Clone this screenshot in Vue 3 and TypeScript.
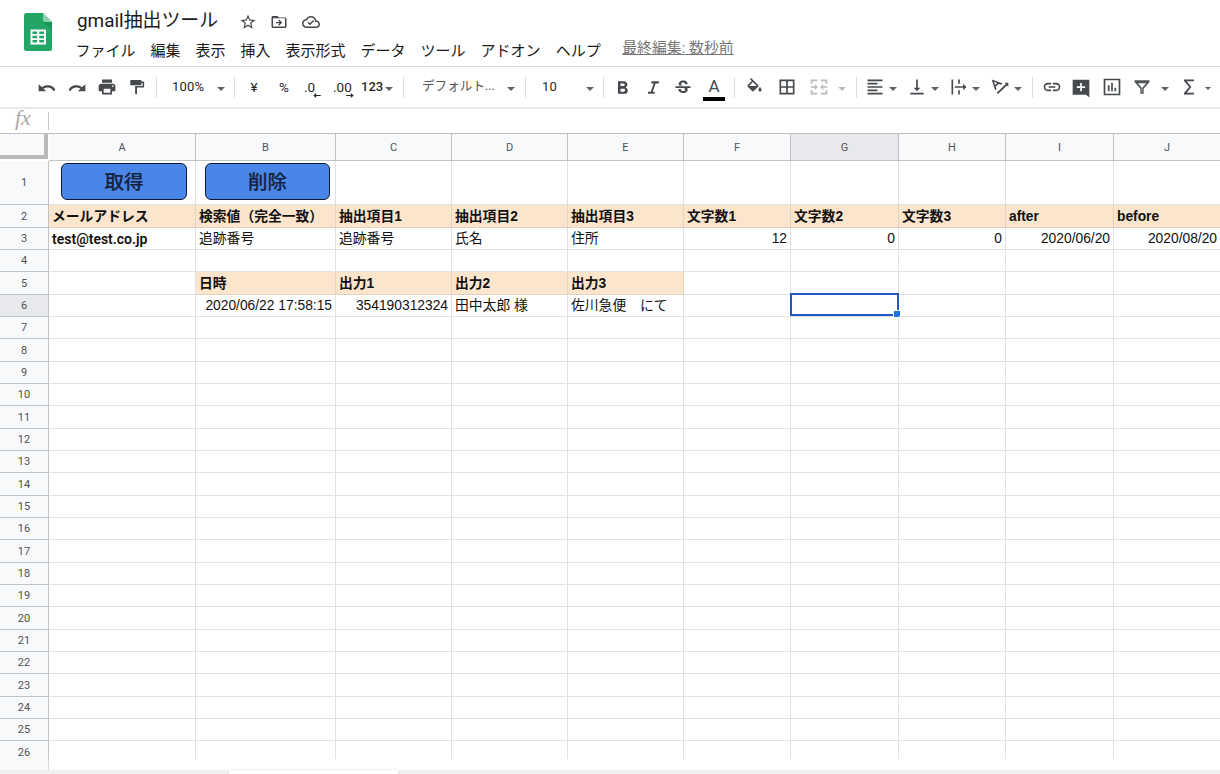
<script setup lang="ts">
type Cell = { text?: string; fill?: boolean; bold?: boolean; right?: boolean; roboto?: boolean }
type Tool = { kind: 'icon' | 'sep' | 'caret' | 'text'; d?: string; text?: string; cls?: string }

const menus: string[] = ['ファイル', '編集', '表示', '挿入', '表示形式', 'データ', 'ツール', 'アドオン', 'ヘルプ']
const letters: string[] = ['A', 'B', 'C', 'D', 'E', 'F', 'G', 'H', 'I', 'J']

const icon = (d: string, cls = ''): Tool => ({ kind: 'icon', d, cls })
const text = (t: string, cls: string): Tool => ({ kind: 'text', text: t, cls })
const sep: Tool = { kind: 'sep' }
const caret: Tool = { kind: 'caret' }

const tools: Tool[] = [
  icon('M2 7.500v8.500h9l-3.200-3c1.300-1 3-1.700 4.800-1.700 3.300 0 6 1.700 7 4.200l2.400-.9C21 11 17.300 8.800 12.800 8.800c-2.500 0-4.800.8-6.600 2.300z', 'undo'),
  icon('M22 7.500v8.500h-9l3.200-3c-1.300-1-3-1.700-4.800-1.700-3.300 0-6 1.700-7 4.200l-2.400-.9C3 11 6.700 8.800 11.200 8.800c2.500 0 4.800.8 6.600 2.300z', 'undo'),
  icon('M19 8H5c-1.660 0-3 1.340-3 3v6h4v4h12v-4h4v-6c0-1.660-1.340-3-3-3zm-3 11H8v-5h8v5zm3-7c-.55 0-1-.45-1-1s.45-1 1-1 1 .45 1 1-.45 1-1 1zm-1-9H6v4h12V3z', 'shift'),
  icon('M18 4V3c0-.55-.45-1-1-1H4c-.55 0-1 .45-1 1v5c0 .55.45 1 1 1h13c.55 0 1-.45 1-1V6h1.500v4H9.500v10c0 .55.450 1 1 1H12V12h9.500V4z', 'paint'),
  sep,
  text('100%', 'zoom'),
  caret,
  sep,
  text('¥', 'mid'),
  text('%', 'mid'),
  text('.0', 'dec left'),
  text('.00', 'dec'),
  text('123', 'num'),
  caret,
  sep,
  text('デフォルト...', 'font'),
  caret,
  sep,
  text('10', 'size'),
  caret,
  sep,
  icon('M15.600 10.790c.970-.670 1.650-1.770 1.650-2.790 0-2.260-1.750-4-4-4H6v15h8.040c2.090 0 3.710-1.700 3.710-3.790 0-1.520-.860-2.820-2.150-3.420zM9 6.500h3.500c.830 0 1.500.670 1.500 1.500s-.670 1.500-1.500 1.500H9v-3zm4 10H9v-3.500h4c.830 0 1.500.670 1.500 1.500s-.670 2-1.500 2z', 'bold-icon'),
  icon('M10 4v2.500h2.700l-3.400 10H6V19h8v-2.500h-2.300l3.400-10H19V4z', 'low'),
  icon('M7.240 8.750c-.26-.48-.39-1.030-.39-1.670 0-.61.13-1.160.4-1.670.26-.5.63-.93 1.110-1.290.48-.35 1.050-.63 1.700-.83.66-.19 1.390-.29 2.180-.29.810 0 1.540.11 2.210.34.66.22 1.230.54 1.690.94.470.4.830.88 1.080 1.430s.38 1.150.38 1.810h-3.010c0-.31-.05-.59-.15-.85-.09-.27-.24-.49-.44-.68-.2-.19-.45-.33-.75-.44-.3-.1-.66-.16-1.060-.16-.39 0-.74.040-1.030.13s-.53.21-.72.36c-.19.16-.34.340-.44.550-.1.210-.15.430-.15.660 0 .48.25.88.74 1.210.38.25.77.48 1.410.7H7.390c-.05-.08-.11-.17-.15-.25zM21 12v-2H3v2h9.620c.18.070.4.140.55.200.37.170.66.340.87.510s.35.360.43.570c.07.200.11.430.11.690 0 .23-.05.45-.14.660-.09.200-.23.380-.42.530-.19.150-.42.260-.71.350-.29.080-.63.130-1.010.130-.43 0-.83-.04-1.180-.13s-.66-.23-.91-.42c-.25-.19-.45-.44-.59-.75s-.25-.76-.25-1.210H6.400c0 .55.080 1.130.24 1.580s.37.850.65 1.210c.28.350.6.660.98.920.37.260.78.480 1.220.650.44.170.9.300 1.380.390.48.080.96.130 1.440.130.8 0 1.530-.09 2.180-.28s1.210-.45 1.670-.79c.46-.34.82-.77 1.070-1.270s.38-1.070.38-1.710c0-.6-.1-1.140-.31-1.610-.05-.11-.11-.23-.17-.33H21V12z', 'low'),
  text('A', 'color'),
  sep,
  icon('M16.560 8.940L7.620 0 6.210 1.410l2.380 2.380-5.150 5.150c-.59.590-.59 1.540 0 2.120l5.500 5.500c.29.290.68.440 1.060.440s.77-.15 1.060-.44l5.500-5.500c.59-.58.59-1.530 0-2.120zM5.210 10L10 5.210 14.790 10H5.210zM19 11.500s-2 2.170-2 3.500c0 1.100.9 2 2 2s2-.9 2-2c0-1.330-2-3.500-2-3.500z', 'bucket'),
  icon('M3 3v18h18V3H3zm8 16H5v-6h6v6zm0-8H5V5h6v6zm8 8h-6v-6h6v6zm0-8h-6V5h6v6z'),
  icon('M2 3h8v2.200H4.200V8H2zM14 3h8v5h-2.200V5.200H14zM2 16h2.200v2.800H10V21H2zM19.800 16H22v5h-8v-2.200h5.800zM2 11h5V8.500l3.700 3.500L7 15.500V13H2zM22 11h-5V8.500L13.300 12l3.700 3.500V13h5z', 'dim'),
  { kind: 'caret', cls: 'dim' },
  sep,
  icon('M3 3h18v2H3zM3 7h12v2H3zM3 11h18v2H3zM3 15h12v2H3zM3 19h18v2H3z'),
  caret,
  icon('M16 13h-3V3h-2v10H8l4 4 4-4zM4 19v2h16v-2H4z'),
  caret,
  icon('M3 3h2v18H3zM11 3h2v5h-2zM11 16h2v5h-2zM7 11h10V8l4 4-4 4v-3H7z'),
  caret,
  icon('M2 3l13 4.500-2 1.700-2.600-.9-3.600 3.400 1.100 2.700L6.200 16zM4.800 5.800l1.300 4 2.500-2.500zM8 18.800L19 8.500 17.300 7H22v4.800l-1.600-1.700L9.500 20.300z'),
  caret,
  sep,
  icon('M3.900 12c0-1.710 1.390-3.100 3.100-3.100h4V7H7c-2.760 0-5 2.240-5 5s2.240 5 5 5h4v-1.900H7c-1.710 0-3.100-1.390-3.100-3.100zM8 13h8v-2H8v2zm9-6h-4v1.900h4c1.710 0 3.100 1.390 3.100 3.100s-1.390 3.100-3.100 3.100h-4V17h4c2.760 0 5-2.240 5-5s-2.240-5-5-5z'),
  icon('M22 2H2v18h16l4 3.500zM17 12h-4v4h-2v-4H7v-2h4V6h2v4h4v2z', 'comment'),
  icon('M2 2v20h20V2zm2 2h16v16H4zM7 10h2v7H7zM11 7h2v10h-2zM15 13h2v4h-2z', 'shift'),
  icon('M3 4h18v2l-7 8v6h-4v-6L3 6zM7 7.500l4.700 5.500v5.500h.6V13L17 7.500z', 'filter'),
  caret,
  icon('M18 3H6v1.700l6.200 7.300L6 19.300V21h12v-2.200H9.200L14.900 12 9.200 5.200H18z'),
  { kind: 'caret', cls: 'small' },
]

const head = (t: string): Cell => ({ text: t, fill: true, bold: true })
const data: Record<number, Cell[]> = {
  2: ['メールアドレス', '検索値（完全一致）', '抽出項目1', '抽出項目2', '抽出項目3', '文字数1', '文字数2', '文字数3', 'after', 'before'].map(head),
  3: [
    { text: 'test@test.co.jp', roboto: true },
    { text: '追跡番号' },
    { text: '追跡番号' },
    { text: '氏名' },
    { text: '住所' },
    { text: '12', right: true },
    { text: '0', right: true },
    { text: '0', right: true },
    { text: '2020/06/20', right: true },
    { text: '2020/08/20', right: true },
  ],
  5: [{}, head('日時'), head('出力1'), head('出力2'), head('出力3')],
  6: [
    {},
    { text: '2020/06/22 17:58:15', right: true },
    { text: '354190312324', right: true },
    { text: '田中太郎 様' },
    { text: '佐川急便　にて' },
  ],
}
const edge = (n: number): number => Math.round(204.2 + 22.34 * (n - 1))
const rows = Array.from({ length: 26 }, (_, i) => {
  const n = i + 1
  const height = n === 1 ? 44 : n === 26 ? 18 : edge(n) - edge(n - 1)
  return { n, height, cells: letters.map((_, c): Cell => data[n]?.[c] ?? {}) }
})
</script>

<template>
  <div class="app">
    <header class="top">
      <svg class="logo" viewBox="0 0 28 38">
        <path d="M2.500 0H19l9 9v26.500a2.500 2.500 0 0 1-2.500 2.500h-23A2.500 2.500 0 0 1 0 35.500v-33A2.500 2.500 0 0 1 2.500 0z" fill="#23a566" />
        <path d="M19 9h9v8z" fill="#1c9659" />
        <path d="M19 0l9 9h-7a2 2 0 0 1-2-2z" fill="#8ed1b1" />
        <path d="M6.500 16.500h15.500v15H6.500zM8.500 18.500v2.400h4.600v-2.400zM15.300 18.500v2.400h4.700v-2.400zM8.500 22.800v2.400h4.600v-2.400zM15.300 22.800v2.400h4.700v-2.400zM8.500 27.100v2.400h4.600v-2.400zM15.300 27.100v2.400h4.700v-2.400z" fill="#fff" fill-rule="evenodd" />
      </svg>
      <div class="titles">
        <div class="title-row">
          <span class="title">gmail抽出ツール</span>
          <svg class="t-icon" viewBox="0 0 24 24"><path d="M22 9.240l-7.190-.62L12 2 9.190 8.630 2 9.240l5.460 4.730L5.820 21 12 17.270 18.180 21l-1.630-7.030L22 9.240zM12 15.400l-3.760 2.270 1-4.280-3.320-2.880 4.380-.38L12 6.100l1.710 4.040 4.380.38-3.320 2.880 1 4.280L12 15.400z" /></svg>
          <svg class="t-icon" viewBox="0 0 24 24"><path d="M20 6h-8l-2-2H4c-1.100 0-2 .9-2 2v12c0 1.100.9 2 2 2h16c1.100 0 2-.9 2-2V8c0-1.100-.9-2-2-2zm0 12H4V7h16v11zM12.200 17l4-4.200-4-4.200-1.300 1.300 1.900 2H8v1.800h4.800l-1.900 2z" /></svg>
          <svg class="t-icon" viewBox="0 0 24 24"><path d="M19.350 10.040C18.670 6.590 15.640 4 12 4 9.110 4 6.600 5.640 5.350 8.040 2.340 8.360 0 10.910 0 14c0 3.310 2.690 6 6 6h13c2.760 0 5-2.240 5-5 0-2.640-2.050-4.780-4.650-4.960zM19 18H6c-2.210 0-4-1.790-4-4 0-2.050 1.530-3.760 3.560-3.970l1.070-.11.5-.95C8.080 7.140 9.940 6 12 6c2.620 0 4.880 1.860 5.390 4.430l.3 1.500 1.530.11c1.560.1 2.780 1.410 2.780 2.960 0 1.650-1.350 3-3 3zM10.600 13.700l-1.900-1.900-1.300 1.300 3.200 3.200 5.600-5.600-1.300-1.300z" /></svg>
        </div>
        <nav class="menus">
          <span v-for="m in menus" :key="m">{{ m }}</span>
          <span class="edited">最終編集: 数秒前</span>
        </nav>
      </div>
    </header>

    <div class="toolbar">
      <template v-for="(t, i) in tools" :key="i">
        <svg v-if="t.kind === 'icon'" class="icon" :class="t.cls" viewBox="0 0 24 24"><path :d="t.d" fill-rule="evenodd" /></svg>
        <i v-else-if="t.kind === 'sep'" class="sep"></i>
        <i v-else-if="t.kind === 'caret'" class="caret" :class="t.cls"></i>
        <span v-else class="label" :class="t.cls">{{ t.text }}<svg v-if="t.cls?.startsWith('dec')" class="arrow" viewBox="0 0 9 6"><path d="M0 2.300h5.500V0L9 3 5.500 6V3.700H0z" /></svg></span>
      </template>
    </div>

    <div class="formula"><span class="fx">fx</span><i></i></div>

    <div class="sheet">
      <div class="row heads">
        <div class="corner"></div>
        <div v-for="l in letters" :key="l" class="col-head" :class="{ active: l === 'G' }">{{ l }}</div>
      </div>
      <div v-for="r in rows" :key="r.n" class="row" :class="{ last: r.n === 26 }" :style="{ height: r.height + 'px' }">
        <div class="row-head" :class="{ active: r.n === 6 }">{{ r.n }}</div>
        <div v-for="(c, i) in r.cells" :key="i" class="cell" :class="{ fill: c.fill, bold: c.bold, right: c.right, roboto: c.roboto }">
          <button v-if="r.n === 1 && i < 2" class="action">{{ i === 0 ? '取得' : '削除' }}</button>
          <span v-else-if="c.text">{{ c.text }}</span>
          <div v-if="r.n === 6 && i === 6" class="selection"><i></i></div>
        </div>
      </div>
      <div class="below"></div>
    </div>
    <footer class="tabs"><div class="tab"></div></footer>
  </div>
</template>

<style>
body {
  margin: 0;
  background: #fff;
  overflow: hidden;
}
</style>

<style scoped>
.app {
  width: 1220px;
  height: 774px;
  overflow: hidden;
  background: #fff;
  font-family: Roboto, "Noto Sans CJK JP", sans-serif;
  color: #1a1a1a;
}
.top {
  display: flex;
  box-sizing: border-box;
  height: 67px;
  border-bottom: 1px solid #d9dadc;
  padding-left: 24px;
}
.logo {
  width: 28px;
  height: 38px;
  margin-top: 13px;
}
.titles {
  margin-left: 24px;
}
.title-row {
  display: flex;
  align-items: center;
  height: 38px;
  padding-top: 1px;
}
.title {
  width: 161px;
  padding: 2px 0 0 1px;
  font-size: 18.900px;
  line-height: 38px;
  white-space: nowrap;
}
.t-icon {
  width: 18px;
  height: 18px;
  margin: 3px 14px 0 0;
  fill: #45494d;
}
.t-icon:nth-of-type(1) {
  margin-left: 1px;
}
.t-icon:nth-of-type(2) {
  margin-left: -1px;
}
.menus {
  display: flex;
  gap: 15px;
  margin: 1px 0 0 -0.500px;
  font-size: 15px;
  line-height: 22px;
  white-space: nowrap;
}
.edited {
  margin: -3px 0 0 6.500px;
  font-size: 14.900px;
  color: #777;
  text-decoration: underline;
}
.toolbar {
  display: grid;
  grid-template-columns:
    30px 30px 31px 29px 16px 45px 17px 10px 30px 28px 30px 29px 24px 18px 18px 86px 18px 16px 45px 17px 9px
    31px 30px 30px 31px 11px 32px 32px 29px 18px 9px 24px 18px 24px 18px 23px 18px 24px 18px 10px
    29px 30px 31px 29px 18px 25px 12px;
  align-items: center;
  box-sizing: border-box;
  height: 42px;
  padding-left: 36px;
  border-bottom: 2px solid #e8e8e8;
}
.icon {
  width: 20px;
  height: 20px;
  fill: #46494d;
}
.icon.dim {
  fill: #b9bbbd;
}
.icon.undo {
  margin: 1px 0 0 1px;
}
.icon.shift {
  margin-left: 0.500px;
}
.icon.comment {
  margin-top: 1px;
}
.icon.bold-icon {
  margin: 1px 0 0 1px;
}
.icon.low {
  margin-top: 1px;
}
.icon.filter {
  fill: #505459;
}
.icon.paint {
  width: 18px;
  height: 19px;
  margin-left: 1px;
}
.icon.bucket {
  width: 19px;
  height: 19px;
}
.sep {
  width: 1px;
  height: 21px;
  background: #dadce0;
}
.caret {
  width: 0;
  height: 0;
  margin-top: 3px;
  border: 4px solid transparent;
  border-top-color: #5f6368;
  border-bottom: 0;
}
.caret.dim {
  border-top-color: #bbb;
}
.caret.small {
  margin-left: 1px;
  border-width: 3px 3px 0;
}
.label {
  position: relative;
  font-size: 13.500px;
  line-height: 20px;
  white-space: nowrap;
  color: #26282a;
}
.zoom,
.size {
  font-size: 13px;
  letter-spacing: 0.200px;
}
.size {
  padding-left: 1px;
}
.mid {
  width: 20px;
  text-align: center;
}
.dec {
  width: 22px;
  padding-left: 1px;
  font-size: 13.500px;
}
.dec.left {
  padding-left: 2px;
}
.arrow {
  position: absolute;
  right: 1px;
  bottom: -1px;
  width: 8px;
  height: 5px;
  fill: #26282a;
}
.left .arrow {
  right: 5px;
  transform: scaleX(-1);
}
.num {
  font-size: 13px;
  font-weight: 500;
}
.font {
  top: -1px;
  padding-left: 1px;
  font-size: 12.600px;
  color: #555;
}
.color {
  width: 22px;
  height: 26px;
  margin-top: 1px;
  font-size: 17px;
  line-height: 22px;
  text-align: center;
  box-sizing: border-box;
  border-bottom: 4px solid #000;
  color: #46494d;
}
.formula {
  display: flex;
  align-items: center;
  box-sizing: border-box;
  height: 25px;
  border-bottom: 1px solid #bdbfc1;
}
.fx {
  width: 48px;
  padding-left: 15px;
  box-sizing: border-box;
  font: italic 22px/20px "Liberation Serif", serif;
  color: #aaa;
  margin-top: -6px;
}
.formula i {
  width: 1px;
  height: 18px;
  background: #c9c9c9;
}
.row {
  display: grid;
  grid-template-columns: 49px 147px 140px 116px 116px 116px 107px 108px 107px 108px 107px;
}
.heads {
  height: 27px;
}
.corner {
  box-sizing: border-box;
  width: 48px;
  height: 25px;
  background: #f8f9fa;
  border-right: 4px solid #b9babb;
  border-bottom: 4px solid #b9babb;
}
.col-head,
.row-head {
  display: flex;
  align-items: center;
  justify-content: center;
  box-sizing: border-box;
  background: #f8f9fb;
  border-right: 1px solid #c0c2c4;
  border-bottom: 1px solid #c0c4c6;
  font-size: 11px;
  color: #505356;
}
.active {
  background: #e8e9ec;
}
.cell {
  position: relative;
  display: flex;
  align-items: center;
  box-sizing: border-box;
  min-width: 0;
  padding: 0 3px;
  border-right: 1px solid #e0e1e2;
  border-bottom: 1px solid #e0e1e2;
  font: 13.800px/20px "Liberation Sans", "Noto Sans CJK JP", sans-serif;
  white-space: nowrap;
  color: #111;
}
.fill {
  background: #fce5cd;
  border-color: #e5d2bf;
}
.bold {
  padding-top: 2px;
  font-weight: 700;
}
.right {
  justify-content: flex-end;
}
.roboto {
  font-family: Roboto, sans-serif;
  font-size: 14px;
  line-height: 18px;
  font-weight: 600;
}
.action {
  box-sizing: border-box;
  width: 126px;
  height: 37px;
  margin: 0 0 2px 8px;
  padding: 0 0 1px;
  border: 1.500px solid #101c33;
  border-radius: 6px;
  background: #4a86e8;
  font: 500 19.500px/30px "Noto Sans CJK JP", sans-serif;
  color: #14233f;
  -webkit-text-stroke: 0.200px #14233f;
}
.cell:nth-child(2) .action {
  margin-left: 9px;
}
.cell:nth-child(3) .action {
  width: 125px;
  margin-left: 6px;
}
.selection {
  position: absolute;
  inset: -2px -1px 0 -1px;
  border: 2px solid #2257c5;
}
.selection i {
  position: absolute;
  right: -4px;
  bottom: -4px;
  width: 6px;
  height: 6px;
  border: 1px solid #fff;
  background: #1a73e8;
}
.last .cell,
.last .row-head {
  border-bottom: 0;
}
.last .row-head {
  padding-top: 4px;
}
.below {
  width: 48px;
  height: 11px;
  border-right: 1px solid #d5d7d9;
  background: #f8f9fa;
}
.tabs {
  height: 5px;
  background: #eff0f2;
}
.tab {
  width: 169px;
  height: 5px;
  margin-left: 229px;
  background: #fff;
  box-shadow: 0 0 2px #ccc;
}
</style>
